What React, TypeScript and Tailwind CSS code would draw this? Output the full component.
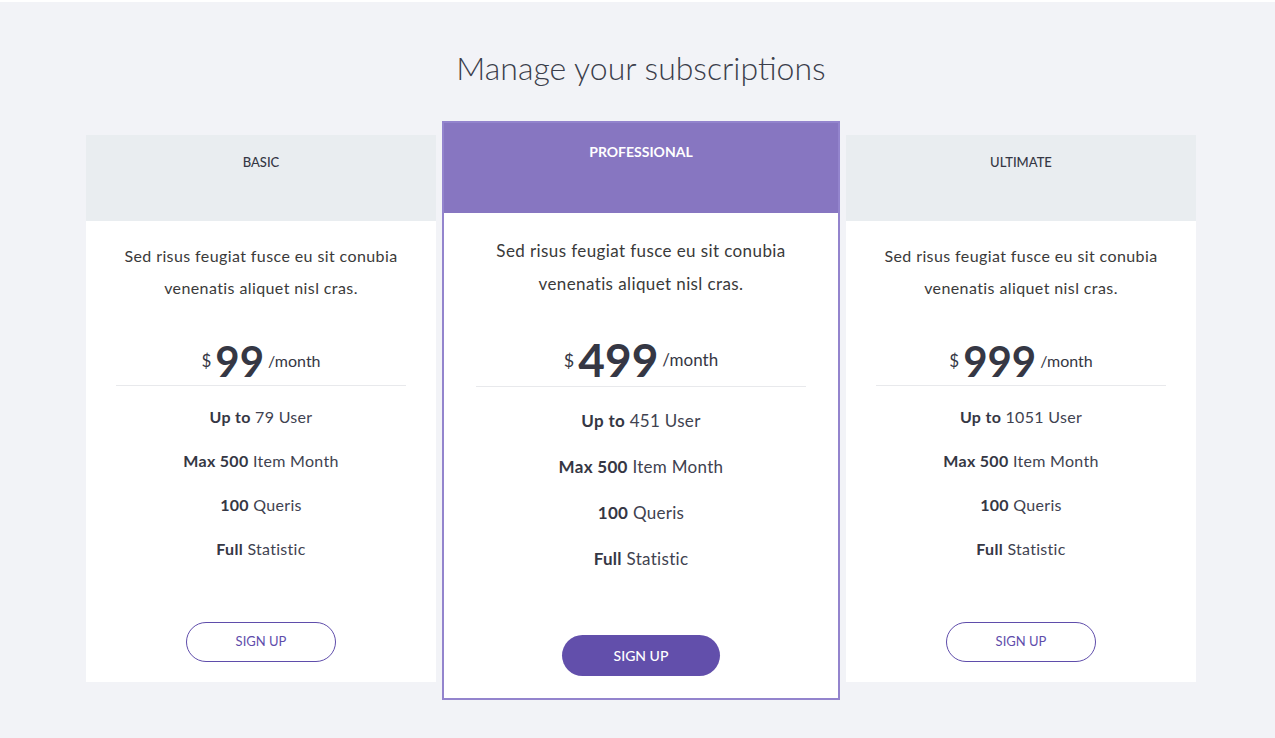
import React from "react";

interface Plan {
  name: string;
  price: string;
  users: string;
  featured?: boolean;
}

const plans: Plan[] = [
  { name: "BASIC", price: "99", users: "79" },
  { name: "PROFESSIONAL", price: "499", users: "451", featured: true },
  { name: "ULTIMATE", price: "999", users: "1051" },
];

function Features({ users, featured }: { users: string; featured?: boolean }) {
  const rows: [string, string][] = [
    ["Up to", `${users} User`],
    ["Max 500", "Item Month"],
    ["100", "Queris"],
    ["Full", "Statistic"],
  ];
  return (
    <ul
      className={
        featured
          ? "flex flex-col gap-[22px] pt-[22px] text-[17px] leading-[24px] tracking-[0.3px]"
          : "flex flex-col gap-[20px] pt-[19px] text-[16px] leading-[24px] tracking-[0.3px]"
      }
    >
      {rows.map(([b, r]) => (
        <li key={b} className="text-center text-[#404250]">
          <span className="font-bold text-[#353744]">{b}</span>{" "}
          <span className="font-normal">{r}</span>
        </li>
      ))}
    </ul>
  );
}

function Card({ plan }: { plan: Plan }) {
  if (plan.featured) {
    return (
      <div className="w-[398px] border-2 border-[#9384cd] bg-white flex flex-col">
        <div className="h-[90px] bg-[#8776c1] pt-[21px] text-center text-[14px] leading-[16px] font-bold text-white">
          {plan.name}
        </div>
        <div className="flex flex-col px-8 pb-[22px]">
          <p className="pt-[21px] text-center text-[17px] leading-[33px] font-normal tracking-[0.4px] text-[#3a3a3a]">
            Sed risus feugiat fusce eu sit conubia
            <br />
            venenatis aliquet nisl cras.
          </p>
          <div className="mt-[34px] h-[53px] border-b border-[#e8e9ec] flex items-center justify-center gap-[4px] text-[#353744]">
            <span className="text-[18px] font-normal">$</span>
            <span className="text-[46px] font-bold leading-none">{plan.price}</span>
            <span className="text-[17px] font-normal">/month</span>
          </div>
          <Features users={plan.users} featured />
          <div className="mt-[64px] flex justify-center">
            <button className="w-[158px] h-[41px] rounded-full bg-[#624fab] text-white text-[14px] font-medium">
              SIGN UP
            </button>
          </div>
        </div>
      </div>
    );
  }
  return (
    <div className="mt-[14px] w-[350px] bg-white flex flex-col">
      <div className="h-[86px] bg-[#e9edf0] pt-[19px] text-center text-[13px] leading-[16px] font-medium text-[#353744]">
        {plan.name}
      </div>
      <div className="flex flex-col px-[30px] pb-[20px]">
        <p className="pt-[19px] text-center text-[16px] leading-[32px] font-normal tracking-[0.4px] text-[#3a3a3a]">
          Sed risus feugiat fusce eu sit conubia
          <br />
          venenatis aliquet nisl cras.
        </p>
        <div className="mt-[33px] h-[49px] border-b border-[#e8e9ec] flex items-center justify-center gap-[4px] text-[#353744]">
          <span className="text-[17px] font-normal">$</span>
          <span className="text-[42px] font-bold leading-none">{plan.price}</span>
          <span className="text-[16px] font-normal">/month</span>
        </div>
        <Features users={plan.users} />
        <div className="mt-[61px] flex justify-center">
          <button className="w-[150px] h-[40px] rounded-full border border-[#5f4dab] text-[#5f4dab] text-[13px]">
            SIGN UP
          </button>
        </div>
      </div>
    </div>
  );
}

export default function App() {
  return (
    <div
      className="min-h-[738px] bg-[#f2f3f7] border-t-2 border-white pl-[7px]"
      style={{ fontFamily: "Lato, 'Noto Sans', sans-serif" }}
    >
      <h1 className="pt-[46px] text-center text-[32px] leading-[40px] font-light text-[#3b3e4b]">
        Manage your subscriptions
      </h1>
      <div className="mt-[33px] flex items-start justify-center gap-[6px]">
        {plans.map((p) => (
          <Card key={p.name} plan={p} />
        ))}
      </div>
    </div>
  );
}
